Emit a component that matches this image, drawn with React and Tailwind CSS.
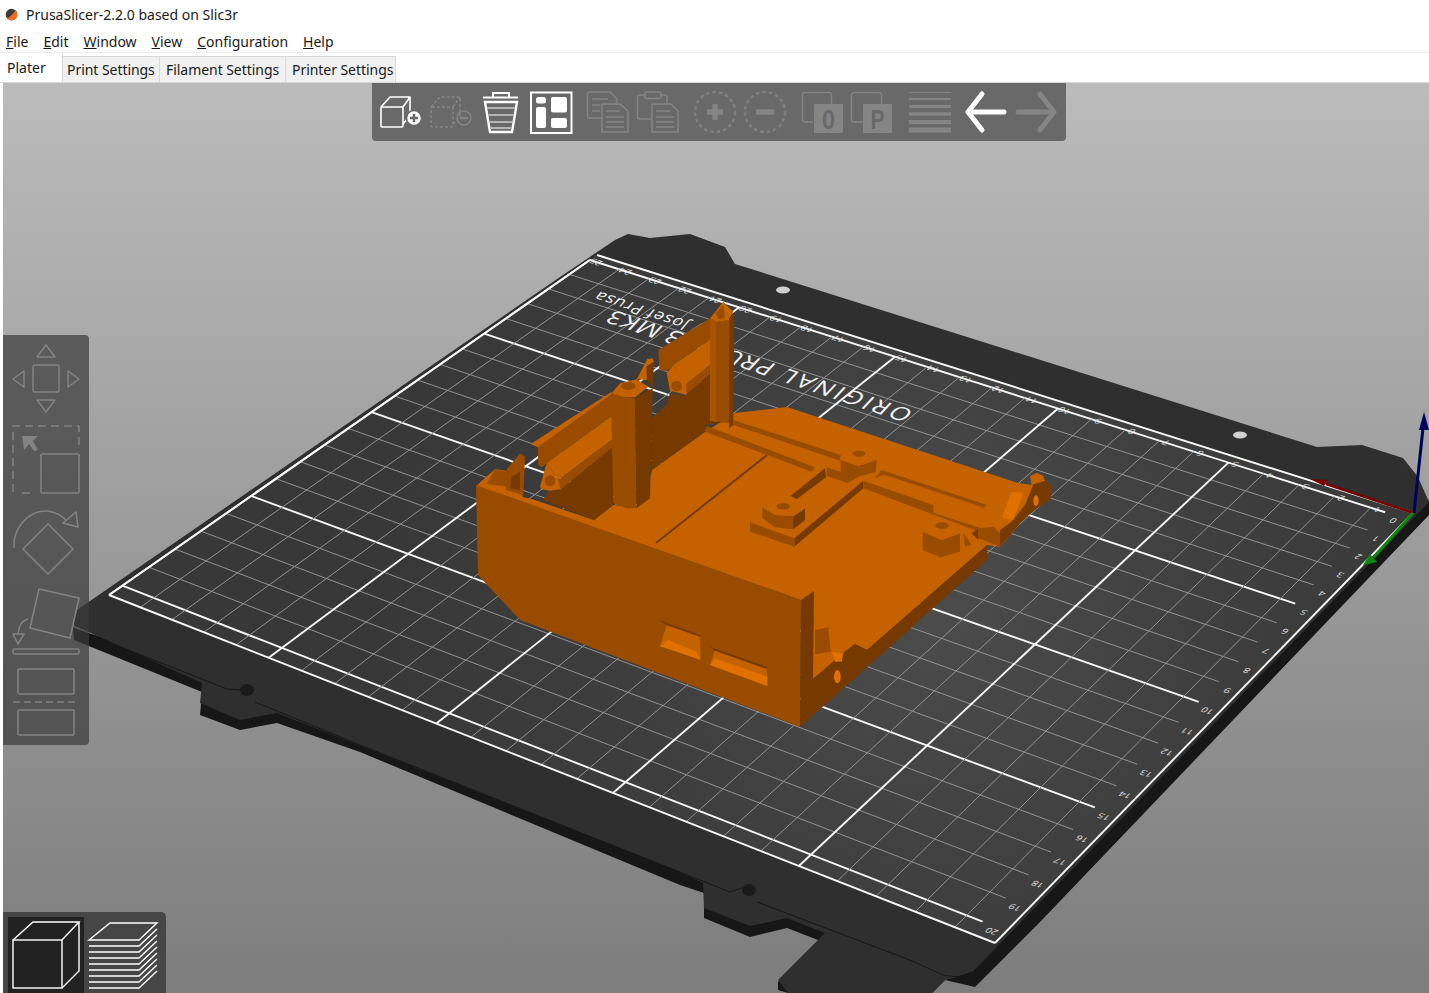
import React from 'react'

const LIGHT = '#c46200'
const MID = '#994c00'
const DARK = '#763a00'
const BRIGHT = '#e07000'

// unit square -> bed quad on screen
const TR = [1413, 513]
const TL = [597, 255]
const BL = [109, 595]
const BR = [995, 943]

function makeHomography() {
  const [x0, y0] = TR
  const [x1, y1] = TL
  const [x2, y2] = BL
  const [x3, y3] = BR
  const dx1 = x1 - x2
  const dx2 = x3 - x2
  const sx = x0 - x1 + x2 - x3
  const dy1 = y1 - y2
  const dy2 = y3 - y2
  const sy = y0 - y1 + y2 - y3
  const den = dx1 * dy2 - dx2 * dy1
  const g = (sx * dy2 - dx2 * sy) / den
  const h = (dx1 * sy - sx * dy1) / den
  const a = x1 - x0 + g * x1
  const b = x3 - x0 + h * x3
  const d = y1 - y0 + g * y1
  const e = y3 - y0 + h * y3
  return (u, v) => {
    const w = g * u + h * v + 1
    return [(a * u + b * v + x0) / w, (d * u + e * v + y0) / w]
  }
}

const H = makeHomography()
const bedPoint = (xmm, ymm) => H(xmm / 250, (ymm + 3.5) / 208.5)

const xLines = Array.from({ length: 26 }, (_, i) => i * 10)
const yLines = Array.from({ length: 21 }, (_, i) => i * 10)

function GridLine({ from, to, thick }) {
  return (
    <line
      x1={from[0]}
      y1={from[1]}
      x2={to[0]}
      y2={to[1]}
      stroke={thick ? '#f8f8f8' : '#929292'}
      strokeWidth={thick ? 1.9 : 1}
    />
  )
}

function Label({ at, children }) {
  return (
    <text
      transform={`matrix(-0.952 -0.306 0.6 -0.62 ${at[0]} ${at[1]})`}
      textAnchor="middle"
      fontSize="10"
      fontFamily="'Open Sans', sans-serif"
      fill="#e2e2e2"
    >
      {children}
    </text>
  )
}

function Bed() {
  return (
    <g>
      {/* underside */}
      <polygon
        fill="#171717"
        points="73,628 74,640 202,692 200,715 240,730 277,723 360,752 680,885 704,893 704,918 750,937 787,928 818,940 825,940 778,982 778,990 788,993 932,993 945,980 975,987 1040,922 1429,515 1429,500 900,900 300,700"
      />
      {/* plate and tabs */}
      <polygon
        fill="#2f2f2f"
        points="73,625 77,610 560,277 615,240 628,234 650,238 690,234 725,247 735,264 1317,447 1362,445 1403,458 1418,477 1429,502 973,972 957,977 945,980 932,993 788,993 778,980 825,933 787,918 750,926 704,908 703,883 680,872 277,713 240,720 200,703 202,683"
      />
      <polyline
        fill="none"
        stroke="#161616"
        strokeWidth="1"
        points="73,628 227,689 240,690"
      />
      <polyline
        fill="none"
        stroke="#161616"
        strokeWidth="1"
        points="255,702 360,745 680,872 730,892 742,888"
      />
      <polyline
        fill="none"
        stroke="#161616"
        strokeWidth="1"
        points="757,902 910,960 943,975 957,977 973,972 1429,505"
      />
      <ellipse cx="247" cy="690" rx="7" ry="6" fill="#1b1b1b" />
      <ellipse cx="749" cy="890" rx="7" ry="6" fill="#1b1b1b" />
      <ellipse cx="783" cy="290" rx="7" ry="3.5" fill="#d0d0d0" />
      <ellipse cx="1240" cy="435" rx="7" ry="3.5" fill="#d0d0d0" />

      {/* print surface */}
      <polygon
        fill="url(#surface)"
        points={`${TR.join(',')} ${TL.join(',')} ${BL.join(',')} ${BR.join(',')}`}
      />

      {yLines.map((y) => (
        <GridLine
          key={`y${y}`}
          from={bedPoint(250, y)}
          to={bedPoint(6, y)}
          thick={y % 50 === 0}
        />
      ))}
      {xLines.slice(1).map((x) => (
        <GridLine
          key={`x${x}`}
          from={bedPoint(x, 0)}
          to={bedPoint(x, 205)}
          thick={x % 50 === 0}
        />
      ))}
      <GridLine from={TR} to={TL} thick />
      <GridLine from={TR} to={BR} thick />
      <GridLine from={BR} to={BL} thick />
      <GridLine from={BL} to={bedPoint(250, 0)} thick />

      {xLines.slice(1).map((x) => {
        const p = bedPoint(x - 1.5, -1.8)
        return (
          <Label key={`lx${x}`} at={[p[0], p[1] + 1]}>
            {x / 10}
          </Label>
        )
      })}
      {yLines.map((y) => {
        const p = bedPoint(3.2, y)
        return (
          <Label key={`ly${y}`} at={[p[0], p[1] + 3]}>
            {y / 10}
          </Label>
        )
      })}

      <text
        transform="matrix(-0.952 -0.32 0.6 -0.64 915 411)"
        fontSize="25"
        fontFamily="'Open Sans', sans-serif"
        fill="#f2f2f2"
      >
        <tspan letterSpacing="2.6">ORIGINAL </tspan>
        <tspan letterSpacing="0.7">PRUSA i3 MK3</tspan>
      </text>
      <text
        transform="matrix(-0.952 -0.32 0.6 -0.72 715 330)"
        fontSize="17"
        letterSpacing="0.8"
        fontFamily="'Open Sans', sans-serif"
        fill="#f2f2f2"
      >
        by Josef Prusa
      </text>
    </g>
  )
}

function Axes() {
  return (
    <g>
      <line x1="1413" y1="513" x2="1326" y2="484" stroke="#7a0000" strokeWidth="2.5" />
      <polygon points="1310,479 1328,480 1324,486" fill="#7a0000" />
      <line x1="1414" y1="513" x2="1423" y2="428" stroke="#00005e" strokeWidth="3" />
      <polygon points="1424,412 1419,430 1429,430" fill="#00005e" />
      <line x1="1413" y1="513" x2="1374" y2="557" stroke="#0a8a0a" strokeWidth="3" />
      <polygon points="1363,565 1370,554 1377,562" fill="#0a8a0a" />
    </g>
  )
}

function Model() {
  return (
    <g>
      {/* floor */}
      <polygon
        fill={LIGHT}
        points="476,486 495,469 507,471 523,497 535,500 594,520 613,505 637,507 650,480 652,470 705,432 735,413 787,407 1018,483 1033,485 1033,505 1020,523 1000,547 987,545 867,650 855,644 843,653 833,662 813,679 813,600 801,600"
      />
      {/* front wall */}
      <polygon fill={MID} points="476,485 801,600 800,727 520,620 478,575" />
      <polygon
        fill={DARK}
        points="801,600 814,591 813,679 833,662 843,653 855,644 867,650 987,545 987,560 800,727"
      />
      <line x1="656" y1="543" x2="767" y2="455" stroke={DARK} strokeWidth="2" />

      {/* back walls, posts */}
      <g transform="translate(470 290) scale(0.3333)">
        <polygon fill={DARK} points="218,630 240,600 270,600 430,470 430,645 372,690" />
        <polygon fill={DARK} points="545,385 590,345 600,310 640,318 770,215 770,395 705,405 705,425 545,540" />

        <polygon fill={MID} points="185,462 425,308 430,375 230,520 215,532 205,525 203,470" />
        <polygon fill={LIGHT} points="182,462 425,305 425,312 203,472" />
        <polygon fill={LIGHT} points="230,520 430,375 465,420 265,570" />
        <polygon fill={MID} points="265,570 465,420 465,442 270,600" />
        <polygon fill={LIGHT} points="210,590 230,520 265,570 272,598 240,602 215,598" />
        <ellipse cx="240" cy="572" rx="16" ry="17" fill={MID} />

        <polygon fill={MID} points="423,310 495,325 500,655 470,655 430,640" />
        <polygon fill={DARK} points="495,325 548,295 540,625 500,655" />
        <polygon fill={LIGHT} points="425,310 450,280 500,268 535,290 495,322 460,320" />
        <ellipse cx="475" cy="288" rx="22" ry="12" fill={MID} />
        <polygon fill={LIGHT} points="500,268 532,207 548,205 552,215 530,270" />
        <polygon fill={DARK} points="530,228 552,215 548,295 530,270" />

        <polygon fill={MID} points="565,180 720,85 720,150 610,225 588,245 568,238" />
        <polygon fill={LIGHT} points="610,225 720,150 770,185 645,285" />
        <polygon fill={MID} points="645,285 770,185 770,210 650,312" />
        <polygon fill={LIGHT} points="590,250 610,225 648,285 650,315 600,302" />
        <ellipse cx="620" cy="288" rx="16" ry="16" fill={MID} />

        <polygon fill={MID} points="720,88 780,85 780,400 740,395 720,392" />
        <polygon fill="#a85400" points="720,88 738,95 738,395 720,392" />
        <polygon fill={DARK} points="778,85 793,68 790,405 778,415" />
        <polygon fill={LIGHT} points="720,85 760,35 790,65 775,90 740,95" />
        <polygon fill={MID} points="738,70 760,45 765,85 745,88" />

        {/* left corner clip */}
        <polygon fill={MID} points="105,545 150,490 165,500 160,620 150,612 108,600" />
        <polygon fill={DARK} points="125,560 150,545 150,600 120,595" />
        <polygon fill={MID} points="50,582 75,537 105,545 112,590" />
      </g>

      {/* rails and standoffs on the floor */}
      <g transform="translate(700 390) scale(0.3333)">
        <polygon fill={MID} points="100,90 422,195 420,212 100,105" />
        <polygon fill={MID} points="20,108 345,232 335,245 15,125" />
        <polygon fill={MID} points="380,232 420,245 445,280 380,258" />
        <polygon fill={DARK} points="272,318 375,235 378,262 290,328" />

        <polygon fill={DARK} points="490,272 490,295 283,470 283,445" />
        <polygon fill={MID} points="150,397 283,445 283,470 150,425" />
        <polygon fill={MID} points="490,272 700,345 700,368 860,420 850,430 490,295" />
        <polygon fill={MID} points="525,265 545,240 860,345 850,355 550,255" />
        <polygon fill={LIGHT} points="555,255 845,350 850,355 550,262" />

        <polygon fill={MID} points="422,210 475,228 530,210 528,245 475,260 445,278 422,255" />
        <polygon fill={LIGHT} points="430,205 460,183 510,185 530,205 490,225" />
        <ellipse cx="477" cy="191" rx="19" ry="9" fill={MID} />

        <polygon fill={MID} points="187,352 187,385 225,412 280,418 315,390 315,355 280,378 225,375" />
        <polygon fill={DARK} points="280,380 315,356 315,390 280,418" />
        <polygon fill={LIGHT} points="188,352 225,325 285,328 315,355 280,378 225,375" />
        <ellipse cx="250" cy="349" rx="20" ry="10" fill={MID} />

        <polygon fill={MID} points="668,425 725,450 780,430 780,485 722,502 668,480" />
        <polygon fill={LIGHT} points="668,425 695,400 750,392 780,430 725,450" />
        <ellipse cx="726" cy="407" rx="20" ry="10" fill={MID} />

        <polygon fill={MID} points="790,430 815,465 795,470" />
        <polygon fill={DARK} points="815,430 835,415 835,450" />
        <polygon fill={MID} points="835,415 880,410 900,430 900,470 835,445" />
        <polygon fill={DARK} points="900,470 960,400 1000,340 1000,285 975,345 935,395 900,420" />
        <polygon fill={BRIGHT} points="905,385 935,305 970,310 940,390" />
        <polygon fill={DARK} points="1000,285 1030,265 1055,290 1052,328 1000,362 960,400" />
        <polygon fill={LIGHT} points="990,258 1010,248 1030,258 1035,272 995,285" />
        <ellipse cx="1008" cy="332" rx="8" ry="16" fill={BRIGHT} />

        <polygon fill={MID} points="345,720 385,712 392,785 345,793" />
        <polygon fill={BRIGHT} points="395,785 430,790 425,815 405,815" />
        <ellipse cx="412" cy="860" rx="10" ry="20" fill={BRIGHT} />
      </g>

      {/* port cutouts */}
      <g transform="translate(470 520) scale(0.3333)">
        <polygon fill={LIGHT} points="590,315 690,350 692,420 570,378" />
        <polygon fill={DARK} points="568,300 690,345 690,350 590,315" />
        <polygon fill={BRIGHT} points="570,378 595,360 680,395 692,420" />
        <polygon fill={LIGHT} points="735,390 890,445 892,498 720,435" />
        <polygon fill={DARK} points="720,380 890,440 890,447 735,392" />
        <polygon fill={BRIGHT} points="720,435 735,415 892,470 892,498" />
      </g>
    </g>
  )
}

function Scene() {
  return (
    <svg
      className="absolute inset-0 w-[1426px] h-[910px]"
      viewBox="3 83 1426 910"
    >
      <defs>
        <radialGradient id="surface" gradientUnits="userSpaceOnUse" cx="930" cy="610" r="560">
          <stop offset="0" stopColor="#4c4c4c" />
          <stop offset="0.6" stopColor="#3d3d3d" />
          <stop offset="1" stopColor="#383838" />
        </radialGradient>
      </defs>
      <Bed />
      <Axes />
      <Model />
    </svg>
  )
}

function ToolIcon({ x, className, children }) {
  return (
    <svg className={`w-[50px] h-[50px] ${className || ''}`} viewBox={`${x} 87 50 50`}>
      {children}
    </svg>
  )
}

const OFF = '#858585'

function TopToolbar() {
  return (
    <div className="absolute left-[369px] top-0 w-[694px] h-[58px] flex pl-[4px] pt-[4px] bg-[#696969] rounded-b-[4px]">
      <ToolIcon x={376}>
        <g fill="none" stroke="#fff" strokeWidth="1.6" strokeLinejoin="round">
          <rect x="381" y="107" width="22" height="20" rx="1" />
          <path d="M381 107 L390 97 H410 V116 L403 124 M403 107 L410 97" />
        </g>
        <circle cx="414" cy="118" r="7.5" fill="#fff" stroke="#696969" strokeWidth="1.5" />
        <path d="M410 118 H418 M414 114 V122" stroke="#696969" strokeWidth="2.5" />
      </ToolIcon>
      <ToolIcon x={426}>
        <g fill="none" stroke={OFF} strokeWidth="1.6" strokeDasharray="3 2">
          <rect x="431" y="107" width="22" height="20" rx="1" />
          <path d="M431 107 L440 97 H460 V116 L453 124 M453 107 L460 97" />
        </g>
        <circle cx="464" cy="118" r="7" fill="none" stroke={OFF} strokeWidth="1.5" />
        <path d="M460 118 H468" stroke={OFF} strokeWidth="2.5" />
      </ToolIcon>
      <ToolIcon x={476}>
        <g fill="none" stroke="#fff" strokeWidth="2">
          <path d="M483 97.5 H518" />
          <path d="M493 97 V93 H509 V97" />
          <path d="M485 102 H517 L512 132 H490 Z" strokeWidth="2.4" />
        </g>
        <path d="M487 108 H515 M488 115 H514 M489 122 H513 M490 128 H512" stroke="#b5b5b5" strokeWidth="2" />
      </ToolIcon>
      <ToolIcon x={526}>
        <rect x="531" y="92.5" width="40.5" height="40.5" fill="none" stroke="#fff" strokeWidth="2" />
        <rect x="536" y="97" width="10" height="6.5" rx="2.5" fill="#fff" />
        <rect x="536" y="107" width="10" height="21" rx="2" fill="#fff" />
        <rect x="551" y="97" width="16" height="15.5" rx="2" fill="#fff" />
        <rect x="551" y="118" width="16" height="10" rx="2" fill="#fff" />
      </ToolIcon>
      <ToolIcon x={582} className="ml-[6px]">
        <g fill="none" stroke={OFF} strokeWidth="1.5">
          <path d="M602 118 H590 Q587.5 118 587.5 116 V94 Q587.5 92 590 92 H610 L617 99 V103" />
          <path d="M602 104 H620 L628 111 V132 H602 Z" />
          <path d="M592 99 H608 M592 105 H600 M592 111 H600" />
          <path d="M606 111 H620 M606 117 H624 M606 122 H624 M606 127 H624" />
        </g>
      </ToolIcon>
      <ToolIcon x={632}>
        <g fill="none" stroke={OFF} strokeWidth="1.5">
          <path d="M652 119 H640 Q637.5 119 637.5 117 V97 Q637.5 95 640 95 H645 M661 95 H665 Q667 95 667 97 V103" />
          <rect x="645" y="92" width="16" height="6.5" rx="1.5" />
          <path d="M652 104 H671 L678 111 V132 H652 Z" />
          <path d="M656 111 H670 M656 117 H674 M656 122 H674 M656 127 H674" />
        </g>
      </ToolIcon>
      <ToolIcon x={690} className="ml-[8px]">
        <circle cx="715" cy="112" r="20" fill="none" stroke="#808080" strokeWidth="2.5" strokeDasharray="3.5 3" />
        <path d="M707 112 H723 M715 104 V120" stroke={OFF} strokeWidth="5.5" />
      </ToolIcon>
      <ToolIcon x={740}>
        <circle cx="765" cy="112" r="20" fill="none" stroke="#808080" strokeWidth="2.5" strokeDasharray="3.5 3" />
        <path d="M756 112 H774" stroke={OFF} strokeWidth="5.5" />
      </ToolIcon>
      <ToolIcon x={797} className="ml-[7px]">
        <path d="M813 122 H805 Q802.5 122 802.5 120 V95 Q802.5 92.5 805 92.5 H829 Q831.5 92.5 831.5 95 V104" fill="none" stroke={OFF} strokeWidth="1.5" />
        <rect x="814" y="104" width="29" height="29" rx="1" fill={OFF} />
        <text x="828.5" y="129" textAnchor="middle" fontSize="28" fontWeight="700" fontFamily="'Liberation Sans', sans-serif" fill="#696969" textLength="13" lengthAdjust="spacingAndGlyphs">0</text>
      </ToolIcon>
      <ToolIcon x={848}>
        <path d="M864 122 H855 Q852.5 122 852.5 120 V95 Q852.5 92.5 855 92.5 H880 Q882.5 92.5 882.5 95 V104" fill="none" stroke={OFF} strokeWidth="1.5" />
        <rect x="864" y="104" width="29" height="29" rx="1" fill={OFF} />
        <text x="878.5" y="129" textAnchor="middle" fontSize="28" fontWeight="700" fontFamily="'Liberation Sans', sans-serif" fill="#696969" textLength="14" lengthAdjust="spacingAndGlyphs">P</text>
      </ToolIcon>
      <ToolIcon x={904} className="ml-[8px]">
        <path d="M908 92.5 H950" stroke={OFF} strokeWidth="1.2" />
        <path d="M908 99 H950" stroke={OFF} strokeWidth="2.2" />
        <path d="M908 106.5 H950" stroke={OFF} strokeWidth="3" />
        <path d="M908 114 H950" stroke={OFF} strokeWidth="3.6" />
        <path d="M908 122 H950" stroke={OFF} strokeWidth="4.2" />
        <path d="M908 130 H950" stroke={OFF} strokeWidth="5" />
      </ToolIcon>
      <ToolIcon x={962} className="ml-[6px]">
        <path d="M1005 112 H969 M983 94 L969 112 L983 130" fill="none" stroke="#fff" strokeWidth="5" strokeLinecap="round" strokeLinejoin="round" />
      </ToolIcon>
      <ToolIcon x={1012}>
        <path d="M1019 112 H1055 M1041 94 L1055 112 L1041 130" fill="none" stroke={OFF} strokeWidth="5" strokeLinecap="round" strokeLinejoin="round" />
      </ToolIcon>
    </div>
  )
}

function SideIcon({ y, h, children }) {
  return (
    <svg className="block w-[86px]" style={{ height: h }} viewBox={`3 ${y} 86 ${h}`}>
      <g fill="none" stroke="#838383" strokeWidth="1.5" strokeLinejoin="round">
        {children}
      </g>
    </svg>
  )
}

function GizmoPanel() {
  return (
    <div className="absolute left-0 top-[252px] w-[86px] h-[410px] pt-[7px] flex flex-col gap-[8px] bg-[#3a3a3a]/70 rounded-r-[4px]">
      <SideIcon y={342} h={74}>
        <path d="M37 357 L46 345 L55 357 Z" />
        <rect x="33" y="365" width="26" height="27" rx="2" />
        <path d="M24 371 L13 379 L24 387 Z" />
        <path d="M68 371 L79 379 L68 387 Z" />
        <path d="M37 400 L46 412 L55 400 Z" />
      </SideIcon>
      <SideIcon y={424} h={74}>
        <path d="M13 492 V426 H79 V448 M22 493 H34" strokeDasharray="8 5" />
        <rect x="41" y="454" width="38" height="39" rx="1" />
        <path d="M22 436 H38 L33 441 L38 450 L34 451 L29 444 L24 450 Z" fill="#838383" stroke="none" />
      </SideIcon>
      <SideIcon y={506} h={74}>
        <path d="M48 524 L73 549 L48 574 L23 549 Z" />
        <path d="M14 548 C12 520 44 498 66 520" />
        <path d="M76 512 L78 527 L63 523 Z" />
      </SideIcon>
      <SideIcon y={588} h={70}>
        <path d="M39 589 L79 598 L70 638 L30 628 Z" />
        <rect x="13" y="649" width="66" height="5" rx="1.5" />
        <path d="M28 619 C21 621 18 628 18 635" />
        <path d="M13 634 H24 L18 644 Z" />
      </SideIcon>
      <SideIcon y={666} h={72}>
        <rect x="18" y="669" width="56" height="25" rx="1" />
        <path d="M13 702 H79" strokeDasharray="7 4" />
        <rect x="18" y="710" width="56" height="25" rx="1" />
      </SideIcon>
    </div>
  )
}

function ViewSwitch() {
  return (
    <div className="absolute left-0 bottom-0 w-[163px] h-[81px] flex pl-[5px] pt-[5px] bg-[#464646] rounded-tr-[5px]">
      <div className="w-[76px] h-[76px] bg-[#222222]">
        <svg className="w-[76px] h-[76px]" viewBox="8 917 76 76">
          <g fill="none" stroke="#fff" strokeWidth="1.4">
            <rect x="13" y="940" width="49" height="48" />
            <path d="M13 940 L33 922 H79 L62 940 M79 922 V971 L62 988" />
          </g>
        </svg>
      </div>
      <svg className="w-[76px] h-[76px]" viewBox="84 917 76 76">
        <g fill="none" stroke="#fff" strokeWidth="1.4">
          <path d="M89 940 L110 923 H157 L139 940 Z" />
          {[946, 952, 958, 964, 970, 976, 982, 988].map((y) => (
            <path key={y} d={`M89 ${y} H139 L157 ${y - 17}`} />
          ))}
        </g>
      </svg>
    </div>
  )
}

const menus = [
  ['F', 'ile'],
  ['E', 'dit'],
  ['W', 'indow'],
  ['V', 'iew'],
  ['C', 'onfiguration'],
  ['H', 'elp'],
]

const tabs = [
  { label: 'Print Settings', box: 'w-[97px] pl-[4px]' },
  { label: 'Filament Settings', box: 'w-[126px] pl-[6px]' },
  { label: 'Printer Settings', box: 'w-[110px] pl-[6px]' },
]

export default function App() {
  return (
    <div className="h-[993px] w-[1429px] overflow-hidden bg-white flex flex-col font-['Noto_Sans',sans-serif] text-[14px] text-[#1a1a1a]">
      <div className="h-[28px] flex items-center pl-[5px] shrink-0">
        <svg className="w-[13px] h-[13px]" viewBox="0 0 13 13">
          <circle cx="6.5" cy="6.5" r="5.8" fill="#3d3d3d" />
          <path d="M10.5 1.5 Q9 6 3 10 Q2 10.5 1.8 10 A5.8 5.8 0 0 0 12.3 6.5 Q12.3 4 10.5 1.5 Z" fill="#f26a21" />
        </svg>
        <span className="ml-[8px]">PrusaSlicer-2.2.0 based on Slic3r</span>
      </div>
      <div className="h-[25px] flex items-center gap-[15px] pl-[6px] pt-[2px] border-b border-[#eeeeee] shrink-0">
        {menus.map(([first, rest]) => (
          <span key={first}>
            <u>{first}</u>
            {rest}
          </span>
        ))}
      </div>
      <div className="h-[30px] flex items-end border-b border-[#d9d9d9] shrink-0">
        <div className="w-[63px] h-[29px] pl-[7px] pt-[4px] bg-white border-r border-[#d9d9d9]">Plater</div>
        {tabs.map((t) => (
          <div key={t.label} className={`${t.box} h-[26px] bg-[#f0f0f0] border border-b-0 border-l-0 border-[#d9d9d9] flex items-center whitespace-nowrap tracking-[-0.05px]`}>
            {t.label}
          </div>
        ))}
      </div>
      <div className="flex-1 pl-[3px]">
        <div className="relative h-full bg-gradient-to-b from-[#bbbbbb] to-[#7d7d7d]">
          <Scene />
          <TopToolbar />
          <GizmoPanel />
          <ViewSwitch />
        </div>
      </div>
    </div>
  )
}
